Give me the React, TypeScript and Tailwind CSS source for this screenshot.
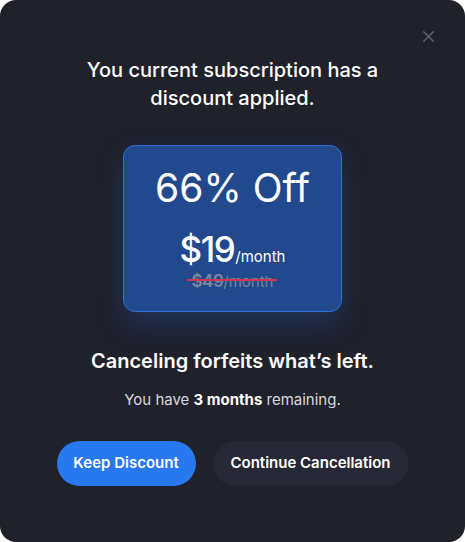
import React from 'react';
import { X } from 'lucide-react';

export default function App() {
  return (
    <div className="w-[465px] h-[542px] bg-white" style={{ fontFamily: 'Inter, "Noto Sans", sans-serif' }}>
      <div className="relative w-full h-full bg-[#1f212b] rounded-[16px] flex flex-col items-center pt-[56px]">
        <button className="absolute right-[27px] top-[27px] text-[#5d6172]">
          <X className="w-[19px] h-[19px]" strokeWidth={2} />
        </button>

        <h1 className="text-white text-[20px] leading-[28px] font-medium text-center w-[320px]">
          You current subscription has a discount applied.
        </h1>

        <div className="mt-[33px] w-[219px] h-[167px] rounded-[12px] border border-[#2f6fd8] bg-[#22488d] shadow-[0_12px_30px_rgba(37,99,235,0.25)] flex flex-col items-center">
          <div className="text-white text-[39px] leading-[44px] mt-[20px]">66% Off</div>
          <div className="mt-[20px] flex items-baseline text-white">
            <span className="text-[35px] leading-[38px] font-medium tracking-[-1.5px]">$19</span>
            <span className="text-[15px] ml-[1px]">/month</span>
          </div>
          <div className="relative flex items-baseline text-[#7b879c] mt-[0px]">
            <span className="text-[17px] font-semibold tracking-[-0.5px]">$49</span>
            <span className="text-[15px]">/month</span>
            <span className="absolute left-[-5px] right-[-4px] top-[10px] h-[2px] bg-[#d6334d]" />
          </div>
        </div>

        <h2 className="mt-[35px] text-white text-[20px] leading-[28px] font-semibold">
          Canceling forfeits what’s left.
        </h2>
        <p className="mt-[15px] text-[#d7d9df] text-[15px] leading-[20px]">
          You have <span className="font-bold text-white">3 months</span> remaining.
        </p>

        <div className="mt-[31px] flex gap-[17px]">
          <button className="h-[45px] w-[139px] rounded-full bg-[#2878f0] text-white text-[15px] font-semibold">
            Keep Discount
          </button>
          <button className="h-[45px] w-[196px] rounded-full bg-[#262935] text-white text-[15px] font-semibold">
            Continue Cancellation
          </button>
        </div>
      </div>
    </div>
  );
}
